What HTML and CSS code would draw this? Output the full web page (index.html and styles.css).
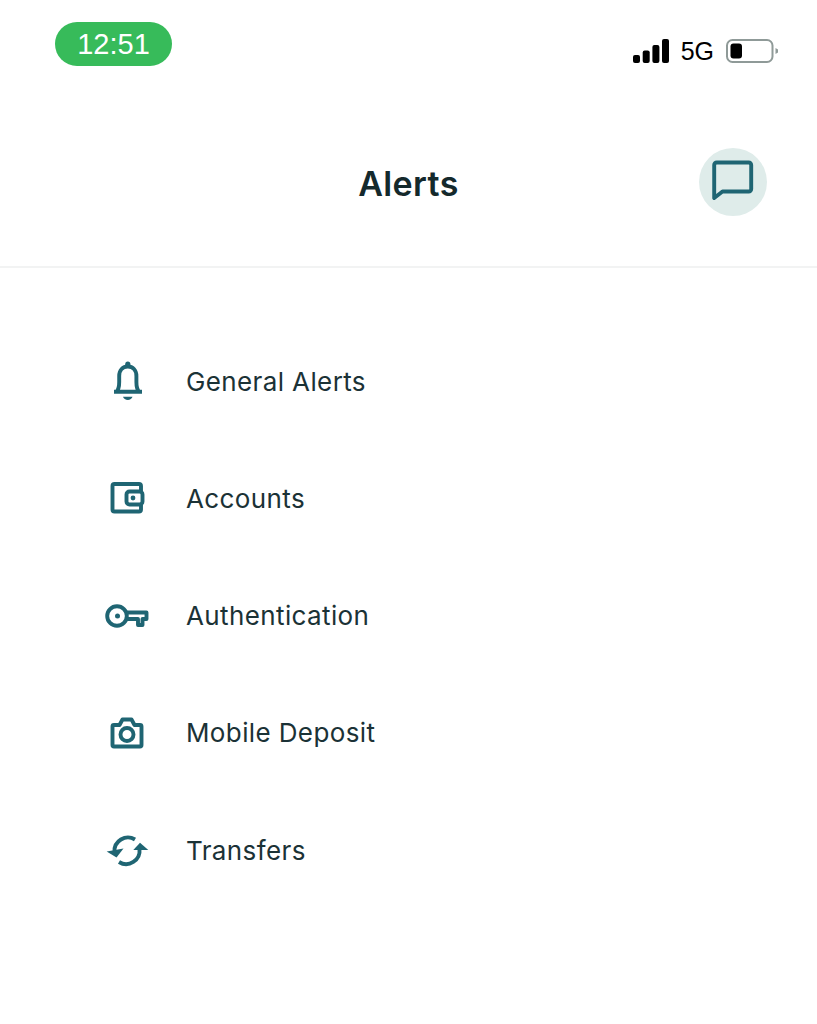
FILE: index.html
```html
<!DOCTYPE html>
<html>
<head>
  <meta charset="UTF-8">
  <meta name="viewport" content="width=device-width, initial-scale=1.0">
  <title>Alerts</title>
  <link rel="stylesheet" href="styles.css">
</head>
<body>
  <div class="status-bar">
    <div class="time-pill">12:51</div>
    <div class="status-right">
      <svg class="signal" width="36" height="24" viewBox="0 0 36 24">
        <rect x="0" y="16" width="7" height="8" rx="2"/>
        <rect x="9.7" y="11.5" width="7" height="12.5" rx="2"/>
        <rect x="19.4" y="6" width="7" height="18" rx="2"/>
        <rect x="29" y="0" width="7" height="24" rx="2"/>
      </svg>
      <span class="network">5G</span>
      <svg class="battery" width="53" height="24" viewBox="0 0 53 24">
        <rect x="1" y="1" width="45.5" height="22" rx="5.5" fill="none" stroke="#8f9a98" stroke-width="2"/>
        <rect x="4.5" y="4.5" width="11.5" height="15" rx="3" fill="#000"/>
        <path d="M49.5 9 L52 10.5 V13.5 L49.5 15 Z" fill="#8f9a98"/>
      </svg>
    </div>
  </div>

  <header class="top-bar">
    <h1 class="title">Alerts</h1>
    <button class="chat-btn" type="button" aria-label="Chat">
      <svg width="68" height="68" viewBox="0 0 68 68">
        <path class="ico" d="M15.2 17 a2.5 2.5 0 0 1 2.5 -2.5 H49.7 a2.5 2.5 0 0 1 2.5 2.5 V41 a2.5 2.5 0 0 1 -2.5 2.5 H23.5 L15.2 50 Z"/>
      </svg>
    </button>
  </header>

  <ul class="menu">
    <li class="menu-row">
      <svg class="menu-icon" viewBox="0 0 48 48">
        <path class="ico" d="M11 34.7 H39 M13.5 34.7 C16 32 16.2 29 16.2 25 V19 C16.2 13 19.8 9.5 24.8 9.5 C29.8 9.5 33.4 13 33.4 19 V25 C33.4 29 33.6 32 36.1 34.7"/>
        <circle class="fill" cx="24.8" cy="7.2" r="2.6"/>
        <path class="fill" d="M20 39.8 H29.5 C29 41.8 27 42.9 24.8 42.9 C22.6 42.9 20.5 41.8 20 39.8 Z"/>
      </svg>
      <span>General Alerts</span>
    </li>
    <li class="menu-row">
      <svg class="menu-icon" viewBox="0 0 48 48">
        <path class="ico" d="M38 17 V12 a2 2 0 0 0 -2 -2 H11.5 a2 2 0 0 0 -2 2 V35.5 a2 2 0 0 0 2 2 H36 a2 2 0 0 0 2 -2 V31"/>
        <rect class="ico" x="23.5" y="17.5" width="16" height="13" rx="3"/>
        <circle class="fill" cx="30" cy="24" r="2.4"/>
      </svg>
      <span>Accounts</span>
    </li>
    <li class="menu-row">
      <svg class="menu-icon" viewBox="0 0 48 48">
        <circle class="ico" cx="14" cy="24" r="9.8"/>
        <circle class="fill" cx="14.5" cy="24" r="2.5"/>
        <path class="ico" d="M23.5 20.5 H43.5 V27 H39.5 V33 H35 V27 H23.5"/>
      </svg>
      <span>Authentication</span>
    </li>
    <li class="menu-row">
      <svg class="menu-icon" viewBox="0 0 48 48">
        <path class="ico" d="M9.5 17.5 a1.5 1.5 0 0 1 1.5 -1.5 H16.5 L19.5 10.5 H28.5 L31.5 16 H37 a1.5 1.5 0 0 1 1.5 1.5 V36 a1.5 1.5 0 0 1 -1.5 1.5 H11 a1.5 1.5 0 0 1 -1.5 -1.5 Z"/>
        <circle class="ico" cx="24" cy="25.5" r="6.5"/>
      </svg>
      <span>Mobile Deposit</span>
    </li>
    <li class="menu-row">
      <svg class="menu-icon" viewBox="0 0 48 48">
        <path class="ico" d="M32 13.5 A13.5 13.5 0 0 0 11.5 26"/>
        <path class="fill" d="M3.7 25.5 L13.5 31.5 L20.5 22.5 Z"/>
        <path class="ico" d="M16 36 A13.5 13.5 0 0 0 36.5 23"/>
        <path class="fill" d="M30.3 24 H45.3 L37 16.7 Z"/>
      </svg>
      <span>Transfers</span>
    </li>
  </ul>
</body>
</html>
```

FILE: styles.css
```css
body {
  margin: 0;
  background: #fff;
  color: #1b3236;
  font-family: Inter, "Liberation Sans", sans-serif;
}
.status-bar {
  display: flex;
  justify-content: space-between;
  align-items: flex-start;
  height: 84px;
  padding: 22px 38px 0 55px;
  box-sizing: border-box;
}
.time-pill {
  width: 117px;
  height: 44px;
  border-radius: 22px;
  background: #37bb5a;
  color: #fff;
  font-family: "Liberation Sans", sans-serif;
  font-size: 29px;
  line-height: 44px;
  text-align: center;
}
.status-right {
  display: flex;
  align-items: center;
  height: 24px;
  margin-top: 17px;
}
.signal {
  fill: #000;
  margin-right: 12px;
}
.network {
  font-family: "Liberation Sans", sans-serif;
  font-size: 25px;
  color: #000;
  margin-right: 12px;
}
.top-bar {
  display: flex;
  justify-content: center;
  align-items: center;
  position: relative;
  height: 166px;
  padding-top: 16px;
  border-bottom: 2px solid #f2f3f3;
}
.title {
  margin: 0;
  font-size: 34px;
  font-weight: 600;
  letter-spacing: 0.4px;
  color: #14292c;
}
.chat-btn {
  position: absolute;
  left: 699px;
  top: 64px;
  width: 68px;
  height: 68px;
  padding: 0;
  border: none;
  border-radius: 50%;
  background: #dfecea;
}
.chat-btn svg {
  display: block;
}
.ico {
  fill: none;
  stroke: #1f6573;
  stroke-width: 3.9;
  stroke-linejoin: round;
}
.fill {
  fill: #1f6573;
}
.menu {
  list-style: none;
  margin: 54.5px 0 0;
  padding: 0 0 0 103px;
}
.menu-row {
  display: flex;
  align-items: center;
  gap: 35px;
  height: 117.25px;
  font-size: 26px;
  letter-spacing: 0.38px;
}
.menu-icon {
  width: 48px;
  height: 48px;
  flex: none;
}
```
